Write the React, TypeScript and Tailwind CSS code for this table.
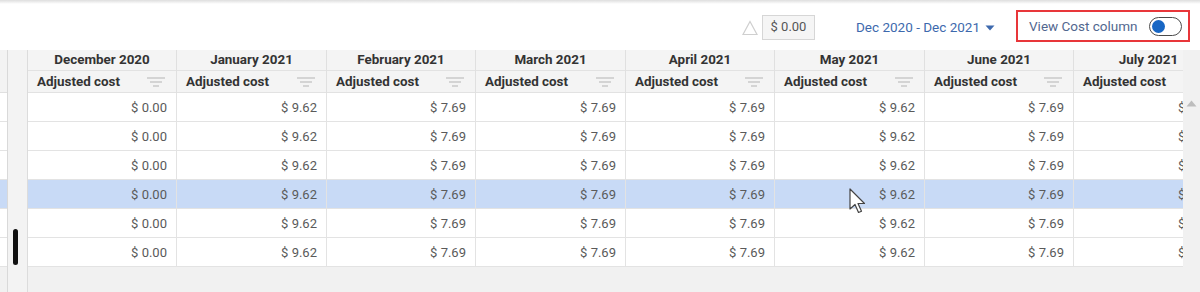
import React from 'react';

const months = [
  'December 2020',
  'January 2021',
  'February 2021',
  'March 2021',
  'April 2021',
  'May 2021',
  'June 2021',
  'July 2021',
];
const values = ['$ 0.00', '$ 9.62', '$ 7.69', '$ 7.69', '$ 7.69', '$ 9.62', '$ 7.69', '$ 7.69'];
const widths = ['w-[149px]', 'w-[150px]', 'w-[149px]', 'w-[150px]', 'w-[149px]', 'w-[150px]', 'w-[149px]', 'w-[150px]'];
const rows = [0, 1, 2, 3, 4, 5];
const selectedRow = 3;

const FilterIcon = () => (
  <svg width="18" height="12" viewBox="0 0 18 12" className="shrink-0">
    <rect x="0" y="1" width="18" height="2" fill="#d4d4d4" />
    <rect x="3" y="5" width="12" height="2" fill="#d4d4d4" />
    <rect x="6" y="9" width="6" height="2" fill="#d4d4d4" />
  </svg>
);

const App: React.FC = () => {
  return (
    <div
      className="relative w-[1200px] h-[292px] bg-white overflow-hidden flex flex-col"
      style={{ fontFamily: 'Roboto, "Liberation Sans", sans-serif' }}
    >
      {/* top shadow */}
      <div className="h-[4px] shrink-0 bg-gradient-to-b from-[#dedede] to-white" />

      {/* toolbar */}
      <div className="h-[46px] shrink-0 flex items-center justify-end pr-[10px]">
        <svg width="16" height="16" viewBox="0 0 16 16" className="mt-[2px]">
          <path d="M8 1.5 L15 14.5 L1 14.5 Z" fill="none" stroke="#cfcfcf" strokeWidth="1.2" />
        </svg>
        <div className="ml-[4px] w-[53px] h-[25px] border border-[#d6d6d6] bg-[#f5f5f5] flex items-center justify-center text-[13px] text-[#555]">
          $ 0.00
        </div>
        <div className="ml-[41px] flex items-center text-[13.5px] text-[#3d69ad]">
          Dec 2020 - Dec 2021
          <svg width="10" height="6" viewBox="0 0 10 6" className="ml-[5px] mt-[1px]">
            <path d="M0.5 0.5 L9.5 0.5 L5 5.5 Z" fill="#3d69ad" />
          </svg>
        </div>
        <div className="ml-[21px] w-[174px] h-[32px] border-2 border-[#e8363a] flex items-center pl-[11px] -mt-[2px]">
          <span className="text-[13.5px] text-[#52678f]">View Cost column</span>
          <div className="ml-[11px] w-[33px] h-[19px] rounded-full border-[1.5px] border-[#4b4b4b] bg-white flex items-center pl-[2px]">
            <div className="w-[13px] h-[13px] rounded-full bg-[#1766c4]" />
          </div>
        </div>
      </div>

      {/* grid area */}
      <div className="flex flex-1 min-h-0">
        {/* left pinned strip */}
        <div className="w-[8px] shrink-0 flex flex-col border-r border-[#d9d9d9]">
          <div className="h-[43px] bg-[#f3f3f3] border-b border-[#e0e0e0]" />
          {rows.map((r) => (
            <div
              key={r}
              className={`h-[29px] border-b border-[#e3e3e3] ${r === selectedRow ? 'bg-[#c8daf6]' : 'bg-white'}`}
            />
          ))}
          <div className="flex-1 bg-[#f1f1f1]" />
        </div>

        {/* gutter with scroll thumb */}
        <div className="w-[20px] shrink-0 bg-[#f3f3f3] border-r border-[#dcdcdc] flex flex-col">
          <div className="mt-[179px] ml-[5px] w-[5px] h-[36px] rounded-full bg-[#111]" />
        </div>

        {/* table */}
        <div className="flex-1 min-w-0 overflow-hidden flex flex-col bg-[#f1f1f1]">
          <div className="flex w-max">
            {months.map((m, i) => (
              <div key={m} className={`${widths[i]} shrink-0 flex flex-col border-r border-[#e0e0e0] bg-[#f4f4f4]`}>
                <div className="h-[21px] pt-[1px] flex items-center justify-center text-[13.4px] font-bold text-[#333] border-b border-[#e2e2e2]">
                  {m}
                </div>
                <div className="h-[22px] pt-[1px] flex items-center justify-between pl-[9px] pr-[11px] text-[13.4px] font-bold text-[#333] border-b border-[#e2e2e2]">
                  <span>Adjusted cost</span>
                  <FilterIcon />
                </div>
              </div>
            ))}
          </div>
          {rows.map((r) => (
            <div key={r} className={`flex w-max ${r === selectedRow ? 'bg-[#c8daf6]' : 'bg-white'}`}>
              {values.map((v, i) => (
                <div
                  key={i}
                  className={`${widths[i]} shrink-0 h-[29px] pt-[1px] flex items-center justify-end pr-[9px] text-[13px] text-[#5a5a5a] border-r border-b border-[#e3e3e3]`}
                >
                  {v}
                </div>
              ))}
            </div>
          ))}
        </div>

        {/* right scrollbar */}
        <div className="w-[17px] shrink-0 bg-[#f1f1f1] flex flex-col items-center">
          <svg width="11" height="7" viewBox="0 0 11 7" className="mt-[50px]">
            <path d="M5.5 0.5 L10.5 6.5 L0.5 6.5 Z" fill="#bdbdbd" />
          </svg>
        </div>
      </div>

      {/* mouse cursor */}
      <svg width="20" height="28" viewBox="0 0 20 28" className="absolute left-[849px] top-[188px] pointer-events-none">
        <path
          d="M1 1 L1 21 L6 16.5 L9.5 24.5 L12.5 23.2 L9 15.5 L15.5 15.5 Z"
          fill="#ffffff"
          stroke="#444"
          strokeWidth="1.2"
          strokeLinejoin="round"
        />
      </svg>
    </div>
  );
};

export default App;
